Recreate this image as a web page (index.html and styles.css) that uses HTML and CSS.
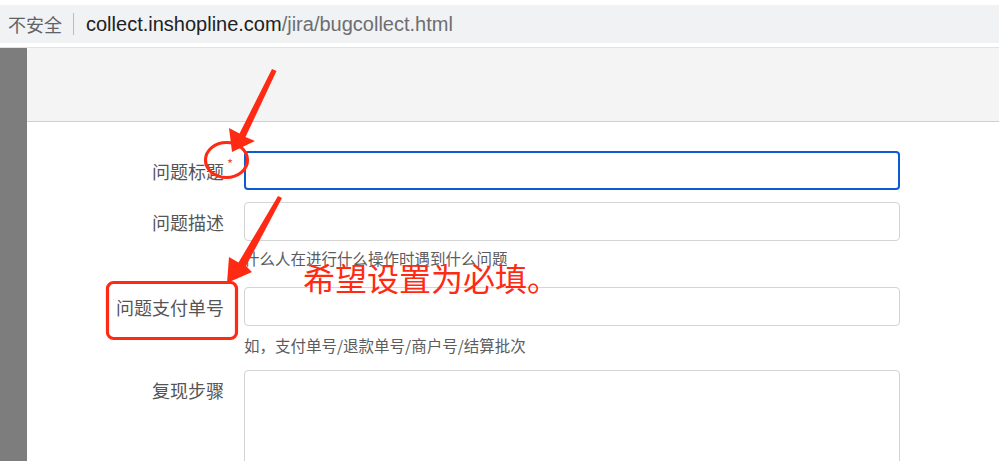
FILE: index.html
```html
<!DOCTYPE html>
<html lang="zh-CN">
<head>
<meta charset="utf-8">
<title>bugcollect</title>
<link rel="stylesheet" href="styles.css">
</head>
<body>
<div class="chrome">
  <span class="insecure">不安全</span>
  <span class="sep"></span>
  <span class="url"><span class="host">collect.inshopline.com</span><span class="path">/jira/bugcollect.html</span></span>
</div>
<div class="viewport">
  <div class="gutter"></div>
  <div class="panel">
    <div class="panel-head"></div>
    <div class="form">
      <div class="row r1">
        <label class="label"><span class="req">问题标题<span class="star">*</span></span></label>
        <div class="field"><div class="input focused"></div></div>
      </div>
      <div class="row r2">
        <label class="label">问题描述</label>
        <div class="field"><div class="input"></div></div>
      </div>
      <div class="help h1">什么人在进行什么操作时遇到什么问题</div>
      <div class="row r3">
        <label class="label">问题支付单号</label>
        <div class="field"><div class="input"></div></div>
      </div>
      <div class="help h2">如，支付单号/退款单号/商户号/结算批次</div>
      <div class="row r4">
        <label class="label top">复现步骤</label>
        <div class="field"><div class="textarea"></div></div>
      </div>
    </div>
  </div>
</div>
<svg class="annot" width="999" height="461" viewBox="0 0 999 461">
  <g fill="#ff2a14" stroke="none">
    <polygon points="272,69 276.5,71 245.5,137 255,141 232,152 229,128 239.5,133.5"/>
    <polygon points="278,196 282,198 246,266 252,272 227,283 229,257 238.5,262.5"/>
  </g>
  <g fill="none" stroke="#ff2a14" stroke-width="3.2">
    <ellipse cx="226.5" cy="160" rx="21" ry="17.5"/>
    <rect x="107.5" y="282.5" width="129" height="56" rx="6" ry="6"/>
  </g>
</svg>
<div class="annot-text">希望设置为必填。</div>
</body>
</html>
```

FILE: styles.css
```css
html, body {
  margin: 0;
  padding: 0;
  width: 999px;
  height: 461px;
  overflow: hidden;
  background: #ffffff;
  font-family: "Noto Sans CJK SC", "Noto Sans", sans-serif;
}

.chrome {
  margin-top: 5px;
  height: 38px;
  background: #f1f2f3;
  display: flex;
  align-items: center;
  padding-left: 8px;
  box-sizing: border-box;
}

.insecure {
  font-family: "Noto Sans CJK SC", sans-serif;
  font-size: 18px;
  color: #5f6368;
  line-height: 20px;
}

.sep {
  width: 1px;
  height: 22px;
  background: #b9bcc0;
  margin: 0 12px 0 11px;
}

.url {
  font-family: "Liberation Sans", Arial, sans-serif;
  font-size: 20px;
  line-height: 22px;
}

.host { color: #202124; }
.path { color: #6b6e72; }

.viewport {
  margin-top: 4px;
  display: flex;
  height: 414px;
  border-top: 1px solid #e2e2e2;
}

.gutter {
  width: 27px;
  background: #7d7d7d;
  flex: none;
}

.panel {
  flex: 1;
  background: #fff;
  border-top-left-radius: 4px;
  overflow: hidden;
}

.panel-head {
  height: 73px;
  background: #f4f4f4;
  border-bottom: 1px solid #cfcfcf;
}

.form {
  padding-top: 29px;
}

.row {
  display: flex;
  align-items: center;
}

.label {
  width: 197px;
  flex: none;
  text-align: right;
  font-size: 18px;
  line-height: 24px;
  color: #555555;
  padding-right: 20px;
}

.label.top {
  align-self: flex-start;
  padding-top: 8px;
}

.req {
  position: relative;
}

.star {
  position: absolute;
  right: -9px;
  top: -6px;
  font-size: 13px;
  color: #d9534f;
}

.field {
  width: 656px;
  flex: none;
}

.input {
  height: 39px;
  box-sizing: border-box;
  border: 1.5px solid #d4d4d4;
  border-radius: 4px;
  background: #fff;
}

.input.focused {
  border: 2px solid #0b5bd3;
  height: 39px;
}

.textarea {
  height: 120px;
  box-sizing: border-box;
  border: 1.5px solid #d4d4d4;
  border-radius: 4px;
}

.r2 { margin-top: 12px; }

.help {
  margin-left: 217px;
  font-size: 15.5px;
  line-height: 20px;
  color: #5c5c5c;
}

.h1 { margin-top: 7px; }
.r3 { margin-top: 19px; }
.h2 { margin-top: 9px; }
.r4 { margin-top: 15px; }

.annot {
  position: absolute;
  left: 0;
  top: 0;
  pointer-events: none;
}

.annot-text {
  position: absolute;
  left: 303px;
  top: 261px;
  font-family: "Noto Sans CJK SC", sans-serif;
  font-size: 32px;
  line-height: 32px;
  color: #ff2a14;
  white-space: nowrap;
}
```
